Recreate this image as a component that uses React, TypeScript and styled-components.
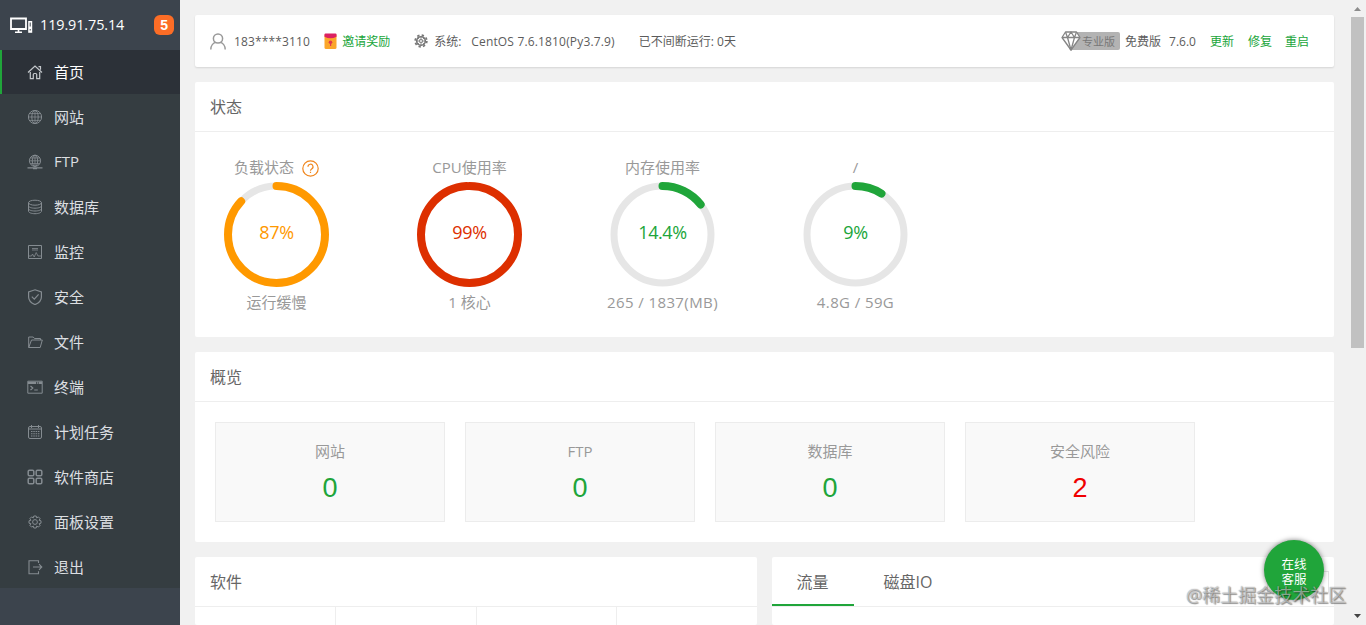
import React from 'react';
import styled, { createGlobalStyle, css } from 'styled-components';

const GREEN = '#20a53a';

const GlobalStyle = createGlobalStyle`
  * { box-sizing: border-box; }
  html, body { margin: 0; height: 100%; overflow: hidden; }
  body {
    background: #f1f1f1;
    color: #666;
    font-family: 'Open Sans', 'Noto Sans CJK SC', sans-serif;
    font-size: 12px;
  }
`;

const Shell = styled.div`
  display: flex;
  height: 625px;
  width: 1366px;
  overflow: hidden;
`;

const Sidebar = styled.aside`
  width: 180px;
  flex: none;
  background: #3c444d;
`;

const Server = styled.div`
  height: 50px;
  display: flex;
  align-items: center;
  padding: 0 6px 0 10px;
  color: #fff;
  font-size: 14.4px;
  letter-spacing: -0.1px;
  svg { flex: none; margin: 1px 7px 0 0; }
`;

const Address = styled.span`
  padding-bottom: 2px;
`;

const Badge = styled.span`
  margin-left: auto;
  width: 20px;
  height: 20px;
  border-radius: 6px;
  background: #fc6d26;
  font: bold 14px/20px 'Liberation Sans', sans-serif;
  text-align: center;
`;

const Menu = styled.nav`
  background: #353d41;
  height: 538px;
`;

const MenuItem = styled.a<{ $active?: boolean }>`
  display: flex;
  align-items: center;
  height: 44px;
  margin-bottom: 1px;
  padding-left: 27px;
  font-size: 15px;
  color: #dcdfe1;
  svg { flex: none; margin-right: 11px; color: #858c91; }
  ${(p) => p.$active && css`
    background: #2c3138;
    box-shadow: inset 2px 0 ${GREEN};
    color: #fff;
    svg { color: #c4c8cc; }
  `}
`;

const MenuLabel = styled.span`
  padding-bottom: 2px;
`;

const Main = styled.main`
  flex: 1;
  display: flex;
  flex-direction: column;
  gap: 15px;
  padding: 15px 15px 0;
  min-width: 0;
`;

const Card = styled.section`
  background: #fff;
  border-radius: 2px;
`;

const TopBar = styled(Card)`
  height: 52px;
  flex: none;
  display: flex;
  align-items: center;
  padding: 0 25px 0 15px;
  box-shadow: 0 1px 2px rgba(0, 0, 0, 0.12);
  white-space: nowrap;
  color: #5c5c5c;
`;

const Group = styled.div<{ $left?: number; $gap?: number; $spacing?: number }>`
  display: flex;
  align-items: center;
  height: 100%;
  gap: ${(p) => p.$gap ?? 6}px;
  margin-left: ${(p) => p.$left ?? 0}px;
  letter-spacing: ${(p) => p.$spacing ?? 0}px;
  svg { flex: none; }
`;

const Version = styled.div`
  display: flex;
  align-items: center;
  margin-left: auto;
`;

const Link = styled.a<{ $left?: number }>`
  color: ${GREEN};
  margin-left: ${(p) => p.$left ?? 0}px;
`;

const Pro = styled.span`
  display: flex;
  align-items: center;
  height: 18px;
  width: 51px;
  padding-left: 13px;
  margin-right: 5px;
  border-radius: 2px;
  background: #b3b3b3;
  color: #777;
  font-size: 11px;
  svg { margin-left: -21px; margin-right: 1px; flex: none; overflow: visible; }
`;

const VersionNumber = styled.span`
  margin: 0 14px 0 8px;
`;

const CardHead = styled.header`
  height: 50px;
  display: flex;
  align-items: center;
  padding: 0 15px 2px;
  border-bottom: 1px solid #eee;
  font-size: 16px;
`;

const StatusCard = styled(Card)`
  height: 255px;
  flex: none;
`;

const Gauges = styled.div`
  display: flex;
  padding: 24px 0 0 0;
  margin-left: -15px;
`;

const Gauge = styled.div`
  width: 193px;
  display: flex;
  flex-direction: column;
  align-items: center;
  font-size: 15px;
  color: #999;
`;

const GaugeLabel = styled.div`
  display: flex;
  align-items: center;
  gap: 8px;
  height: 22px;
  line-height: 22px;
  svg { margin-top: 2px; }
`;

const GaugeNote = styled.div<{ $spacing?: number }>`
  line-height: 22px;
  height: 22px;
  margin-top: 4px;
  font-size: 15px;
  letter-spacing: ${(p) => p.$spacing ?? 0}px;
`;

const Dial = styled.div<{ $color: string }>`
  display: grid;
  place-items: center;
  height: 105px;
  margin-top: 4px;
  color: ${(p) => p.$color};
  font-size: 18px;
  letter-spacing: -0.4px;
  > * { grid-area: 1 / 1; }
  > span { padding-bottom: 6px; }
`;

const OverviewCard = styled(Card)`
  height: 190px;
  flex: none;
`;

const Stats = styled.div`
  display: flex;
  gap: 20px;
  padding: 20px;
`;

const Stat = styled.div`
  width: 230px;
  height: 100px;
  padding-top: 17px;
  border: 1px solid #ececec;
  background: #f9f9f9;
  text-align: center;
  font-size: 15px;
  line-height: 22px;
  color: #999;
`;

const StatValue = styled.div<{ $danger?: boolean }>`
  margin-top: 9px;
  font: 27px/35px 'Liberation Sans', sans-serif;
  color: ${(p) => (p.$danger ? '#f00000' : GREEN)};
`;

const Bottom = styled.div`
  display: flex;
  gap: 15px;
  flex: 1;
`;

const HalfCard = styled(Card)`
  flex: 1;
  display: flex;
  flex-direction: column;
`;

const SoftGrid = styled.div`
  flex: 1;
  display: grid;
  grid-template-columns: 140px 141px 140px 1fr;
  > div + div { border-left: 1px solid #eee; }
`;

const Tabs = styled(CardHead)`
  padding: 0;
  align-items: stretch;
`;

const Tab = styled.div<{ $active?: boolean }>`
  width: ${(p) => (p.$active ? 82 : 109)}px;
  display: flex;
  align-items: center;
  justify-content: center;
  padding-right: 1px;
  padding-top: 1px;
  border-bottom: 2px solid ${(p) => (p.$active ? GREEN : 'transparent')};
`;

const NetSelect = styled.div`
  width: 62px;
  height: 22px;
  margin: 14px 5px 0 auto;
  border: 1px solid #e4e4e4;
`;

const Scrollbar = styled.div`
  width: 17px;
  flex: none;
  display: flex;
  flex-direction: column;
  align-items: center;
  justify-content: space-between;
`;

const Thumb = styled.div`
  width: 13px;
  height: 331px;
  background: #c1c1c1;
  margin-bottom: auto;
`;

const Arrow = styled.svg`
  display: block;
  flex: none;
`;

const Support = styled.div`
  position: absolute;
  left: 1264px;
  top: 540px;
  width: 60px;
  height: 60px;
  border-radius: 50%;
  background: ${GREEN};
  box-shadow: 0 0 5px rgba(0, 0, 0, 0.5);
  color: #fff;
  text-align: center;
  font-size: 12.5px;
  line-height: 15px;
  padding-top: 17px;
`;

const Watermark = styled.div`
  position: absolute;
  left: 1186px;
  top: 582px;
  font-size: 18px;
  line-height: 26px;
  white-space: nowrap;
  color: rgba(255, 255, 255, 0.5);
  text-shadow: 0 0 1px rgba(0, 0, 0, 0.5), 1px 1px 1px rgba(0, 0, 0, 0.4);
`;

const Icon = ({ children, size = 16 }: { children: React.ReactNode; size?: number }) => (
  <svg width={size} height={size} viewBox="0 0 16 16" fill="none" stroke="currentColor" strokeWidth="1">
    {children}
  </svg>
);

const icons: Record<string, React.ReactNode> = {
  home: <path d="M1 8.500 8 2l7 6.500M11.500 2.700h2v3M3.300 8v6.700h3v-4.200q0-1 1-1h1.400q1 0 1 1v4.200h3V8" strokeWidth="1.200" />,
  globe: <><circle cx="8" cy="8" r="6.600" /><ellipse cx="8" cy="8" rx="3.200" ry="6.600" /><path d="M8 1.400v13.200M1.400 8h13.200M2.400 4.600h11.200M2.400 11.400h11.200" strokeWidth=".8" /></>,
  ftp: <><circle cx="8" cy="6.800" r="5.600" /><ellipse cx="8" cy="6.800" rx="2.700" ry="5.600" /><path d="M8 1.200v11M2.400 6.800h11.200M3.300 4h9.400M3.300 9.600h9.400" strokeWidth=".8" /><path d="M.5 13.800h15M6 14.700h4" strokeWidth="1.300" /></>,
  db: <><ellipse cx="8" cy="3.700" rx="6.500" ry="2.500" /><path d="M1.500 3.700v8.500c0 1.400 2.900 2.500 6.500 2.500s6.500-1.100 6.500-2.500V3.700M1.500 6.800c0 1.400 2.900 2.400 6.500 2.400s6.500-1 6.500-2.400M1.500 9.600c0 1.400 2.900 2.400 6.500 2.400s6.500-1 6.500-2.400" /></>,
  monitor: <><path d="M1.500 1.500h13v13h-13z" /><path d="M2 12h2.500l1-2 1.700 3 2-4.500L11 12h3.200M5 4.500h6M5 6h6" strokeWidth=".8" /></>,
  shield: <><path d="M8 .8 14.400 3v5c0 4-3 6.200-6.400 7.600C4.600 14.200 1.600 12 1.600 8V3z" strokeWidth="1.200" /><path d="m4.800 7.700 2.500 2.500 4.300-4.800" strokeWidth="1.200" /></>,
  folder: <path d="M1.700 13.500V3h4.500l1.300 1.500h6V6M1.700 13.500h11.500L15.300 6H4.500z" />,
  terminal: <><path d="M.8 2.200h14.400v12H.8z" /><path d="M1 3.800h14" strokeWidth="2.200" strokeDasharray="8 .8 1 .8" /><path d="m3.500 7 2.300 2-2.300 2M7.200 11h3.600" strokeWidth="1.200" /></>,
  calendar: <><rect x="1.500" y="2.500" width="13" height="12" rx="1.500" /><path d="M4.500 1v3M11.500 1v3M1.500 5h13" /><path d="M4 7.500h8.500M4 9.700h8.500M4 12h8.500" strokeWidth="1.100" strokeDasharray="1.500 .8" /></>,
  apps: <g strokeWidth="1.500"><rect x="1.200" y="1.200" width="5.600" height="5.600" rx="1.300" /><rect x="9.200" y="1.200" width="5.600" height="5.600" rx="1.300" /><rect x="1.200" y="9.200" width="5.600" height="5.600" rx="1.300" /><rect x="9.200" y="9.200" width="5.600" height="5.600" rx="1.300" /></g>,
  gear: <><path d="M6.800 1.200h2.400l.5 1.900 1.700-1 1.700 1.700-1 1.700 1.900.5v2.400l-1.900.5 1 1.700-1.700 1.700-1.700-1-.5 1.900H6.800l-.5-1.900-1.700 1-1.700-1.700 1-1.700-1.900-.5V6l1.900-.5-1-1.700 1.700-1.700 1.700 1z" transform="translate(0 .8)" /><circle cx="8" cy="8" r="2.400" /></>,
  exit: <path d="M11.500 4V1.700H2v13h9.500v-2.500M6 8h8.800M12 5.200 14.800 8 12 10.800" strokeWidth="1.100" />,
};

const menu: [string, string][] = [
  ['home', '首页'], ['globe', '网站'], ['ftp', 'FTP'], ['db', '数据库'], ['monitor', '监控'], ['shield', '安全'],
  ['folder', '文件'], ['terminal', '终端'], ['calendar', '计划任务'], ['apps', '软件商店'], ['gear', '面板设置'], ['exit', '退出'],
];

const gauges = [
  { label: '负载状态', value: 87, text: '87%', note: '运行缓慢', color: '#ff9900', help: true, spacing: 0 },
  { label: 'CPU使用率', value: 99, text: '99%', note: '1 核心', color: '#dd2f00', spacing: 0 },
  { label: '内存使用率', value: 14.4, text: '14.4%', note: '265 / 1837(MB)', color: GREEN, spacing: 0.4 },
  { label: '/', value: 9, text: '9%', note: '4.8G / 59G', color: GREEN, spacing: 0.4 },
];

const Ring = ({ value, color }: { value: number; color: string }) => (
  <svg width="105" height="105" viewBox="0 0 105 105" fill="none">
    <circle cx="52.500" cy="52.500" r="48.500" stroke="#e6e6e6" strokeWidth="7" />
    <circle
      cx="52.500" cy="52.500" r="48.500" stroke={color} strokeWidth="8" strokeLinecap="round"
      pathLength="100" strokeDasharray={`${value} 100`} transform="rotate(-90 52.500 52.500)"
    />
  </svg>
);

const HelpIcon = () => (
  <svg width="17" height="17" viewBox="0 0 17 17" fill="none" stroke="#f0861d" strokeWidth="1.200">
    <circle cx="8.500" cy="8.500" r="7.700" />
    <path d="M6 6.800a2.500 2.500 0 1 1 3.700 2.100q-1.200.7-1.200 1.800M8.500 11.800v1.300" />
  </svg>
);

export default function App() {
  return (
    <>
      <GlobalStyle />
      <Shell>
        <Sidebar>
          <Server>
            <svg width="23" height="17" viewBox="0 0 23 17" fill="none" stroke="#fff">
              <path d="M1 1.500h15v10.500H1z" strokeWidth="1.800" />
              <path d="M5 15.300h7M8.500 12v3" strokeWidth="1.600" />
              <path d="M18.200 4h4v11.800h-4z" fill="#fff" stroke="none" />
              <path d="M20.200 5.500v4M20.200 12v1.500" stroke="#3c444d" />
            </svg>
            <Address>119.91.75.14</Address>
            <Badge>5</Badge>
          </Server>
          <Menu>
            {menu.map(([icon, label]) => (
              <MenuItem key={icon} $active={icon === 'home'}>
                <Icon>{icons[icon]}</Icon>
                <MenuLabel>{label}</MenuLabel>
              </MenuItem>
            ))}
          </Menu>
        </Sidebar>
        <Main>
          <TopBar>
            <Group $gap={8} $spacing={0.15}>
              <svg width="16" height="17" viewBox="0 0 16 17" fill="none" stroke="#999" strokeWidth="1.500">
                <circle cx="8" cy="5.500" r="4.600" /><path d="M.8 16.500c0-4 2.500-6.700 5-7.300M15.200 16.500c0-4-2.500-6.700-5-7.300" />
              </svg>
              183****3110
            </Group>
            <Group $left={14} $gap={5}>
              <svg width="13" height="16" viewBox="0 0 13 16">
                <rect x=".5" y="1" width="12" height="15" rx="1.500" fill="#fba62b" />
                <path d="M.5 1.500Q.5.500 1.500.5h10q1 0 1 1v2.200q-6 3-12 0z" fill="#dc2162" />
                <circle cx="6.500" cy="9.300" r="1.800" fill="#e1394d" /><path d="M6 10h1.200v3H6z" fill="#e1394d" />
              </svg>
              <Link>邀请奖励</Link>
            </Group>
            <Group $left={24} $gap={6}>
              <svg width="14" height="14" viewBox="0 0 14 14" fill="none" stroke="#777">
                <circle cx="7" cy="7" r="4.300" strokeWidth="1.600" />
                <circle cx="7" cy="7" r="5.800" strokeWidth="1.800" strokeDasharray="2.300 2.255" />
                <circle cx="7" cy="7" r="1.500" strokeWidth="1" />
                <path d="M7 2v3M7 9v3M2 7h3M9 7h3M3.500 3.500l2 2M8.500 8.500l2 2M10.500 3.500l-2 2M5.500 8.500l-2 2" strokeWidth=".8" />
              </svg>
              系统:
            </Group>
            <Group $left={10} $spacing={0.16}>CentOS 7.6.1810(Py3.7.9)</Group>
            <Group $left={24} $spacing={0}>已不间断运行: 0天</Group>
            <Version>
              <Pro>
                <svg width="20" height="20" viewBox="0 0 20 20" fill="#fff" stroke="#858585" strokeWidth="1.300" strokeLinejoin="round">
                  <path d="M4.500 1h11L19 6.500 10 19 1 6.500z" /><path d="M1 6.500h18M4.500 1 6.500 6.500 10 19l3.500-12.500L15.500 1M6.500 6.500 10 1l3.500 5.500" fill="none" />
                </svg>
                专业版
              </Pro>
              免费版
              <VersionNumber>7.6.0</VersionNumber>
              <Link>更新</Link>
              <Link $left={14}>修复</Link>
              <Link $left={13}>重启</Link>
            </Version>
          </TopBar>
          <StatusCard>
            <CardHead>状态</CardHead>
            <Gauges>
              {gauges.map((g) => (
                <Gauge key={g.label}>
                  <GaugeLabel>{g.label}{g.help && <HelpIcon />}</GaugeLabel>
                  <Dial $color={g.color}>
                    <Ring value={g.value} color={g.color} />
                    <span>{g.text}</span>
                  </Dial>
                  <GaugeNote $spacing={g.spacing}>{g.note}</GaugeNote>
                </Gauge>
              ))}
            </Gauges>
          </StatusCard>
          <OverviewCard>
            <CardHead>概览</CardHead>
            <Stats>
              <Stat>网站<StatValue>0</StatValue></Stat>
              <Stat>FTP<StatValue>0</StatValue></Stat>
              <Stat>数据库<StatValue>0</StatValue></Stat>
              <Stat>安全风险<StatValue $danger>2</StatValue></Stat>
            </Stats>
          </OverviewCard>
          <Bottom>
            <HalfCard>
              <CardHead>软件</CardHead>
              <SoftGrid><div /><div /><div /><div /></SoftGrid>
            </HalfCard>
            <HalfCard>
              <Tabs as="div">
                <Tab $active>流量</Tab>
                <Tab>磁盘IO</Tab>
                <NetSelect />
              </Tabs>
            </HalfCard>
          </Bottom>
        </Main>
        <Scrollbar>
          <Arrow width="17" height="17" viewBox="0 0 17 17"><path d="M5 11h7L8.500 7z" fill="#8c8c8c" /></Arrow>
          <Thumb />
          <Arrow width="17" height="17" viewBox="0 0 17 17"><path d="M5 6h7L8.500 10z" fill="#444" /></Arrow>
        </Scrollbar>
      </Shell>
      <Support>在线<br />客服</Support>
      <Watermark>@稀土掘金技术社区</Watermark>
    </>
  );
}
